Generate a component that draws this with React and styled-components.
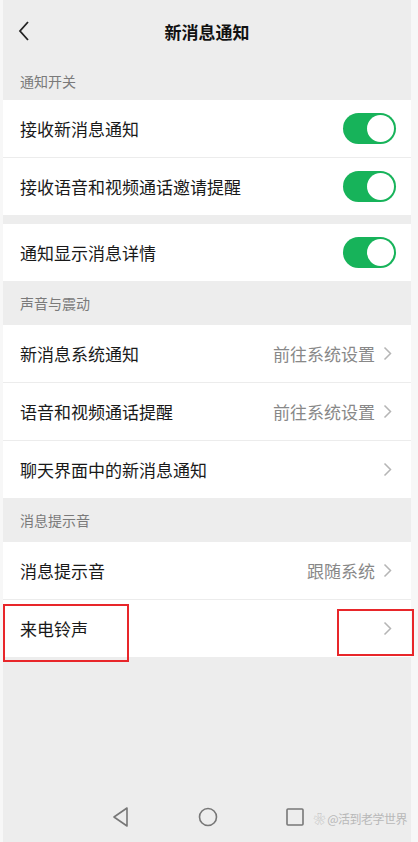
import React from 'react'
import styled, { createGlobalStyle } from 'styled-components'

const GlobalStyle = createGlobalStyle`
  html, body {
    margin: 0;
    padding: 0;
    background: #f7f7f7;
    font-family: "Noto Sans CJK SC", "Noto Sans", sans-serif;
  }
`

const green = '#17b35a'

const Page = styled.div`
  position: relative;
  width: 418px;
  height: 842px;
  overflow: hidden;
`

const Screen = styled.div`
  width: 408px;
  height: 842px;
  margin-left: 3px;
  background: #ededed;
  display: flex;
  flex-direction: column;
`

const NavBar = styled.div`
  height: 62px;
  display: flex;
  align-items: center;
  justify-content: center;
  position: relative;
  font-size: 17px;
  font-weight: 600;
  color: #111;
`

const BackButton = styled.div`
  position: absolute;
  left: 14px;
  top: 20px;
  width: 14px;
  height: 22px;
`

const SectionTitle = styled.div`
  height: ${p => p.h}px;
  display: flex;
  align-items: center;
  padding-left: 17px;
  font-size: 14px;
  color: #7a7a7a;
  box-sizing: border-box;
`

const Card = styled.div`
  background: #fff;
  margin-bottom: ${p => p.gap || 0}px;
`

const Row = styled.div`
  height: 57px;
  display: flex;
  align-items: center;
  padding: 0 14px 0 17px;
  & + & {
    border-top: 1px solid #ececec;
  }
`

const Label = styled.div`
  flex: 1;
  font-size: 17px;
  color: #191919;
`

const Value = styled.div`
  font-size: 17px;
  color: #888;
  margin-right: 8px;
`

const Toggle = styled.div`
  width: 53px;
  height: 31px;
  border-radius: 16px;
  background: ${green};
  position: relative;
  margin-right: 1px;
  &::after {
    content: '';
    position: absolute;
    right: 2px;
    top: 2px;
    width: 27px;
    height: 27px;
    border-radius: 50%;
    background: #fff;
  }
`

const Chevron = () => (
  <svg width="9" height="15" viewBox="0 0 9 15" style={{ marginRight: 5 }}>
    <path d="M1.5 1.5 L7.5 7.5 L1.5 13.5" fill="none" stroke="#b5b5b5" strokeWidth="1.5" />
  </svg>
)

const Spacer = styled.div`
  flex: 1;
`

const SystemBar = styled.div`
  height: 44px;
  position: relative;
`

const SysIcon = styled.div`
  position: absolute;
  left: ${p => p.x}px;
  top: 8px;
`

const Watermark = styled.div`
  position: absolute;
  right: 4px;
  top: 12px;
  font-size: 12px;
  color: #b8b8b8;
  letter-spacing: -0.5px;
`

// red annotation boxes drawn over the screenshot
const Highlight = styled.div`
  position: absolute;
  left: ${p => p.x}px;
  top: ${p => p.y}px;
  width: ${p => p.w}px;
  height: ${p => p.h}px;
  border: 2px solid #e8262a;
  box-sizing: border-box;
`

export default function App() {
  return (
    <>
      <GlobalStyle />
      <Page>
        <Screen>
          <NavBar>
            <BackButton>
              <svg width="14" height="22" viewBox="0 0 14 22">
                <path d="M11 2 L3 11 L11 20" fill="none" stroke="#222" strokeWidth="1.8" />
              </svg>
            </BackButton>
            新消息通知
          </NavBar>

          <SectionTitle h={38}>通知开关</SectionTitle>
          <Card gap={9}>
            <Row>
              <Label>接收新消息通知</Label>
              <Toggle />
            </Row>
            <Row>
              <Label>接收语音和视频通话邀请提醒</Label>
              <Toggle />
            </Row>
          </Card>
          <Card>
            <Row>
              <Label>通知显示消息详情</Label>
              <Toggle />
            </Row>
          </Card>

          <SectionTitle h={44}>声音与震动</SectionTitle>
          <Card>
            <Row>
              <Label>新消息系统通知</Label>
              <Value>前往系统设置</Value>
              <Chevron />
            </Row>
            <Row>
              <Label>语音和视频通话提醒</Label>
              <Value>前往系统设置</Value>
              <Chevron />
            </Row>
            <Row>
              <Label>聊天界面中的新消息通知</Label>
              <Chevron />
            </Row>
          </Card>

          <SectionTitle h={44}>消息提示音</SectionTitle>
          <Card>
            <Row>
              <Label>消息提示音</Label>
              <Value>跟随系统</Value>
              <Chevron />
            </Row>
            <Row>
              <Label>来电铃声</Label>
              <Chevron />
            </Row>
          </Card>

          <Spacer />
          <SystemBar>
            <SysIcon x={108}>
              <svg width="20" height="22" viewBox="0 0 20 22">
                <path d="M16 2 L3 11 L16 20 Z" fill="none" stroke="#777" strokeWidth="1.6" strokeLinejoin="round" />
              </svg>
            </SysIcon>
            <SysIcon x={194}>
              <svg width="22" height="22" viewBox="0 0 22 22">
                <circle cx="11" cy="11" r="8.5" fill="none" stroke="#777" strokeWidth="1.6" />
              </svg>
            </SysIcon>
            <SysIcon x={281}>
              <svg width="22" height="22" viewBox="0 0 22 22">
                <rect x="3" y="3" width="16" height="16" rx="1" fill="none" stroke="#777" strokeWidth="1.6" />
              </svg>
            </SysIcon>
            <Watermark>❀ @活到老学世界</Watermark>
          </SystemBar>
        </Screen>

        <Highlight x={3} y={604} w={126} h={58} />
        <Highlight x={337} y={609} w={77} h={47} />
      </Page>
    </>
  )
}
